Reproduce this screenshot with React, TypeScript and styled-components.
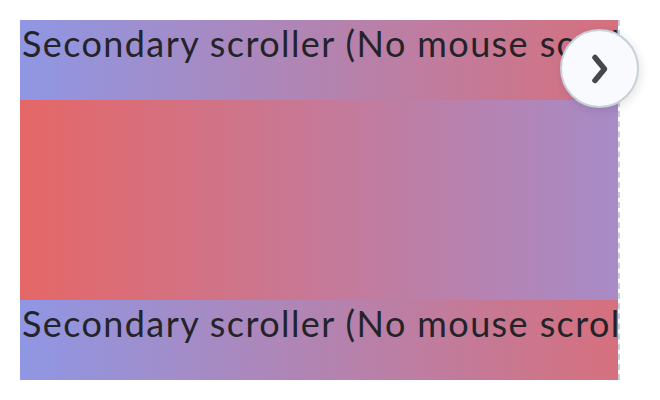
import styled, { createGlobalStyle } from "styled-components";

const Global = createGlobalStyle`
  body {
    margin: 0;
    background: #ffffff;
    font-family: Lato, "Noto Sans", sans-serif;
  }
`;

const Page = styled.div`
  padding: 20px;
`;

const Frame = styled.div`
  position: relative;
  width: 600px;
`;

const Scroller = styled.div`
  width: 598px;
  height: 360px;
  overflow: hidden;
  border-right: 2px dashed #c9d1dc;
  display: flex;
  flex-direction: column;
`;

const Row = styled.div<{ $tall?: boolean; $alt?: boolean }>`
  flex: none;
  height: ${(p) => (p.$tall ? "200px" : "80px")};
  background: ${(p) =>
    p.$alt
      ? "linear-gradient(to right, #e56767, #a88bc7)"
      : "linear-gradient(to right, #8f97e4, #d6707e)"};
  white-space: nowrap;
  overflow: hidden;
`;

const Label = styled.div`
  font-family: Lato, "Noto Sans", sans-serif;
  font-size: 36px;
  line-height: 46px;
  letter-spacing: 1.4px;
  color: #25232a;
  padding-left: 2px;
`;

const NextButton = styled.button`
  position: absolute;
  top: 9px;
  left: 540px;
  width: 79px;
  height: 79px;
  border-radius: 50%;
  background: #f8fafd;
  border: 2px solid #c8d0d8;
  box-shadow: 2px 3px 10px rgba(0, 0, 0, 0.1);
  display: flex;
  align-items: center;
  justify-content: center;
  padding: 0;
  cursor: pointer;
`;

function Chevron() {
  return (
    <svg width="24" height="32" viewBox="0 0 24 32" fill="none">
      <path
        d="M7 4.5L16.5 16L7 27.5"
        stroke="#46474d"
        strokeWidth="5.5"
        strokeLinecap="round"
        strokeLinejoin="round"
      />
    </svg>
  );
}

export default function App() {
  return (
    <>
      <Global />
      <Page>
        <Frame>
          <Scroller>
            <Row>
              <Label>Secondary scroller (No mouse scroll)</Label>
            </Row>
            <Row $tall $alt />
            <Row>
              <Label>Secondary scroller (No mouse scroll)</Label>
            </Row>
          </Scroller>
          <NextButton aria-label="Next">
            <Chevron />
          </NextButton>
        </Frame>
      </Page>
    </>
  );
}
